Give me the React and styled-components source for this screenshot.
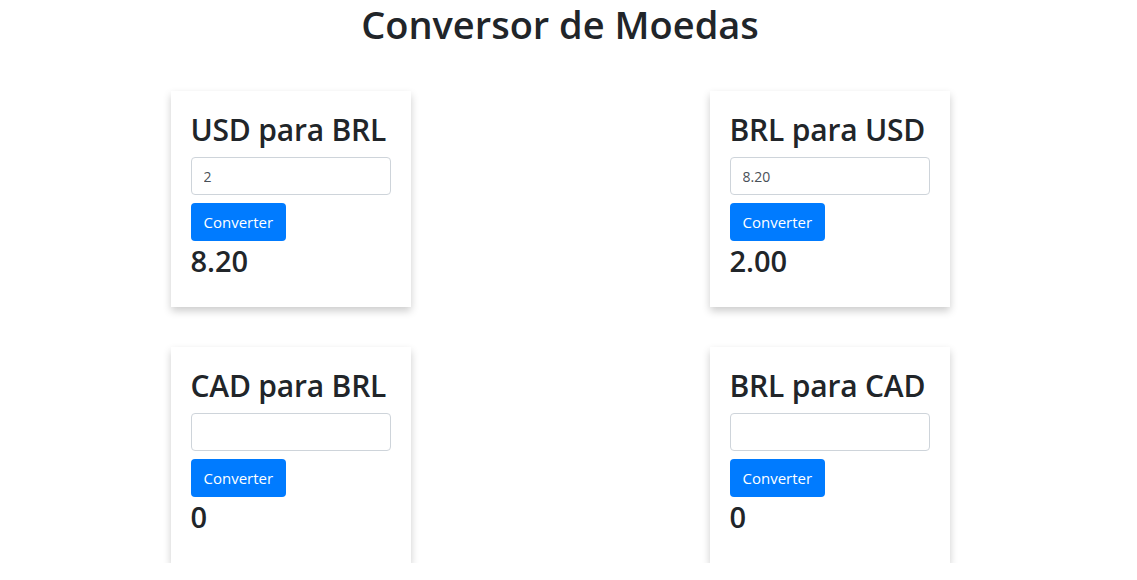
import styled, { createGlobalStyle } from "styled-components";

const GlobalStyle = createGlobalStyle`
  html, body {
    margin: 0;
    padding: 0;
    background: #fff;
    overflow-y: scroll;
  }
  body {
    font-family: "Open Sans", "Noto Sans", sans-serif;
    color: #212529;
  }
`;

const Page = styled.div`
  width: 1120px;
`;

const Title = styled.h1`
  margin: 0 0 43px;
  text-align: center;
  font-size: 38px;
  font-weight: 600;
  line-height: 48px;
`;

const Grid = styled.div`
  display: grid;
  grid-template-columns: 240px 240px;
  column-gap: 299px;
  row-gap: 40px;
  justify-content: center;
`;

const Card = styled.div`
  display: flex;
  flex-direction: column;
  align-items: flex-start;
  padding: 20px 20px 26px;
  background: #fff;
  box-shadow: 0 4px 8px rgba(0, 0, 0, 0.2);
`;

const CardTitle = styled.h2`
  margin: 0 0 8px;
  font-size: 30px;
  font-weight: 600;
  line-height: 38px;
  letter-spacing: -0.2px;
  white-space: nowrap;
`;

const Input = styled.input`
  box-sizing: border-box;
  width: 200px;
  height: 38px;
  margin: 0 0 8px;
  padding: 6px 12px;
  border: 1px solid #ced4da;
  border-radius: 4px;
  font-family: inherit;
  font-size: 14px;
  color: #495057;
  outline: none;
`;

const Button = styled.button`
  height: 38px;
  padding: 0 13px;
  border: none;
  border-radius: 4px;
  background: #007bff;
  color: #fff;
  font-family: inherit;
  font-size: 15px;
  cursor: pointer;
`;

const Result = styled.h3`
  margin: 0;
  font-size: 29px;
  font-weight: 600;
  line-height: 40px;
`;

const pairs = [
  { title: "USD para BRL", value: "2", result: "8.20" },
  { title: "BRL para USD", value: "8.20", result: "2.00" },
  { title: "CAD para BRL", value: "", result: "0" },
  { title: "BRL para CAD", value: "", result: "0" },
];

const App = () => (
  <Page>
    <GlobalStyle />
    <Title>Conversor de Moedas</Title>
    <Grid>
      {pairs.map((p) => (
        <Card key={p.title}>
          <CardTitle>{p.title}</CardTitle>
          <Input type="text" defaultValue={p.value} />
          <Button>Converter</Button>
          <Result>{p.result}</Result>
        </Card>
      ))}
    </Grid>
  </Page>
);

export default App;
